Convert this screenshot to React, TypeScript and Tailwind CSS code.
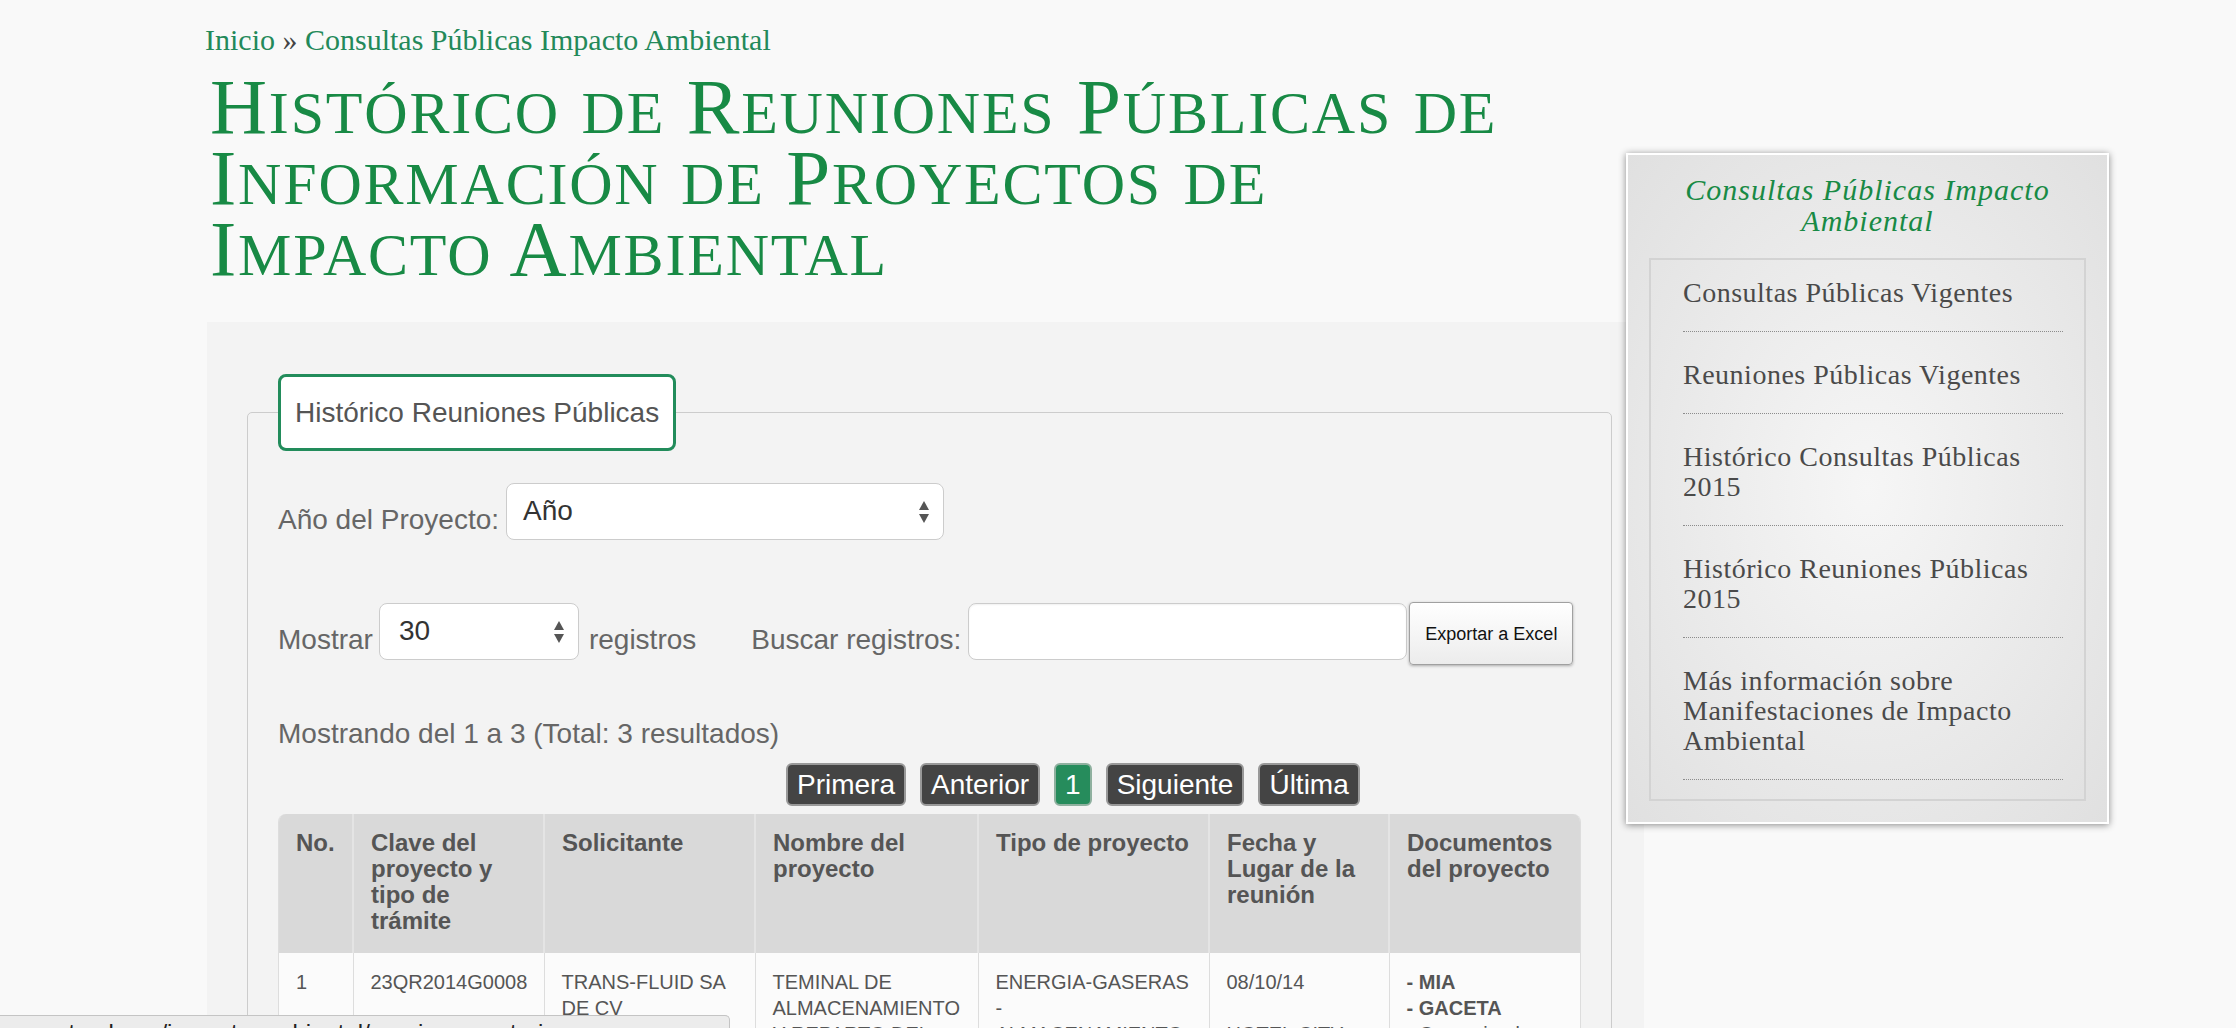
import { Fragment } from 'react'

const sans = "font-['Liberation_Sans',Arial,Helvetica,sans-serif]"
const serif = "font-['Liberation_Serif','Times_New_Roman',serif]"

const sideLinks = [
  'Consultas Públicas Vigentes',
  'Reuniones Públicas Vigentes',
  'Histórico Consultas Públicas 2015',
  'Histórico Reuniones Públicas 2015',
  'Más información sobre Manifestaciones de Impacto Ambiental',
]

const headers = [
  'No.',
  'Clave del proyecto y tipo de trámite',
  'Solicitante',
  'Nombre del proyecto',
  'Tipo de proyecto',
  'Fecha y Lugar de la reunión',
  'Documentos del proyecto',
]

// small caps done by hand: capital letters big, the rest as smaller capitals
function Caps({ line }: { line: string }) {
  return (
    <>
      {line.split(' ').map((word, i) => {
        const big = word[0] === word[0].toUpperCase()
        return (
          <Fragment key={i}>
            {i > 0 && ' '}
            {big && <span>{word[0]}</span>}
            <span className="text-[60px] uppercase leading-[50px]">{big ? word.slice(1) : word}</span>
          </Fragment>
        )
      })}
    </>
  )
}

function SelectArrows() {
  return (
    <svg width="12" height="26" viewBox="0 0 12 26" className="fill-[#555]">
      <path d="M6 2 L11 11 H1 Z" />
      <path d="M1 15 H11 L6 24 Z" />
    </svg>
  )
}

function PageButton({ label, active }: { label: string; active?: boolean }) {
  return (
    <span
      className={
        active
          ? 'flex h-[43px] items-center rounded-[6px] border-2 border-[#8fb09f] bg-[#268c5c] px-[9px] text-[28px] text-white'
          : 'flex h-[43px] items-center rounded-[6px] border-2 border-[#999] bg-[#444] px-[9px] text-[28px] text-white'
      }
    >
      {label}
    </span>
  )
}

export default function App() {
  return (
    <div className={`relative flex h-[1028px] overflow-hidden bg-[#f9f9f9] ${sans}`}>
      {/* Main column */}
      <div className="ml-[205px] flex w-[1439px] shrink-0 flex-col">
        <div className={`pt-[23px] text-[30px] leading-[34px] text-[#23895a] ${serif}`}>
          Inicio <span className="text-[#444]">»</span> Consultas Públicas Impacto Ambiental
        </div>

        <h1 className={`mt-[14px] ml-[5px] text-[79px] leading-[71px] tracking-[1.8px] text-[#188a45] ${serif}`}>
          <Caps line="Histórico de Reuniones Públicas de" />
          <br />
          <Caps line="Información de Proyectos de" />
          <br />
          <Caps line="Impacto Ambiental" />
        </h1>

        <div className="mt-[38px] ml-[2px] flex-1 bg-[#f3f3f3] pt-[52px] pr-[33px] pl-[40px]">
          <fieldset className="rounded-[5px] border border-[#cccccc] px-[30px] pb-[40px]">
            <legend className="rounded-[8px] border-[3px] border-[#228c5b] bg-white px-[14px] py-[19px] text-[28px] leading-[33px] text-[#555]">
              Histórico Reuniones Públicas
            </legend>

            <div className="mt-[32px] flex items-start text-[28px] leading-[32px] text-[#666]">
              <span className="mt-[21px] mr-[7px]">Año del Proyecto:</span>
              <div className="flex h-[57px] w-[438px] items-center justify-between rounded-[8px] border border-[#cccccc] bg-white pr-[13px] pl-[16px] text-[#333]">
                <span className="-mt-[1px]">Año</span>
                <SelectArrows />
              </div>
            </div>

            <div className="mt-[62px] flex items-start text-[28px] leading-[32px] text-[#666]">
              <span className="mt-[22px] mr-[6px]">Mostrar</span>
              <div className="mt-[1px] flex h-[57px] w-[200px] items-center justify-between rounded-[8px] border border-[#cccccc] bg-white pr-[13px] pl-[19px] text-[#333]">
                <span className="-mt-[2px]">30</span>
                <SelectArrows />
              </div>
              <span className="mt-[22px] ml-[10px]">registros</span>
              <span className="mt-[22px] mr-[7px] ml-[55px]">Buscar registros:</span>
              <div className="mt-[1px] h-[57px] w-[439px] rounded-[8px] border border-[#cccccc] bg-white shadow-[inset_0_1px_2px_rgba(0,0,0,0.06)]" />
              <button className="ml-[2px] h-[63px] w-[164px] rounded-[4px] border border-[#a0a0a0] bg-[linear-gradient(#ffffff,#ececec)] text-[18px] text-[#111] shadow-[0_1px_3px_rgba(0,0,0,0.3)]">
                Exportar a Excel
              </button>
            </div>

            <p className="mt-[53px] text-[28px] leading-[32px] text-[#666]">Mostrando del 1 a 3 (Total: 3 resultados)</p>

            <div className="mt-[13px] ml-[508px] flex gap-[14px]">
              <PageButton label="Primera" />
              <PageButton label="Anterior" />
              <PageButton label="1" active />
              <PageButton label="Siguiente" />
              <PageButton label="Última" />
            </div>

            <div className="mt-[8px] overflow-hidden rounded-t-[8px] border-r border-l border-[#dddddd]">
              <table className="w-full table-fixed border-collapse text-left">
                <colgroup>
                  <col className="w-[74px]" />
                  <col className="w-[191px]" />
                  <col className="w-[211px]" />
                  <col className="w-[223px]" />
                  <col className="w-[231px]" />
                  <col className="w-[180px]" />
                  <col className="w-[191px]" />
                </colgroup>
                <thead>
                  <tr className="bg-[#d9d9d9]">
                    {headers.map((h, i) => (
                      <th
                        key={h}
                        className={
                          i === 0
                            ? 'h-[139px] px-[17px] pt-[16px] align-top text-[24px] leading-[26px] font-bold text-[#555]'
                            : 'h-[139px] border-l-2 border-[#e4e4e4] px-[17px] pt-[16px] align-top text-[24px] leading-[26px] font-bold text-[#555]'
                        }
                      >
                        {h}
                      </th>
                    ))}
                  </tr>
                </thead>
                <tbody className="bg-[#fbfbfb] text-[20px] leading-[26px] text-[#555]">
                  <tr>
                    <td className="px-[17px] pt-[16px] pb-[16px] align-top">1</td>
                    <td className="border-l border-[#dddddd] px-[17px] pt-[16px] align-top">23QR2014G0008</td>
                    <td className="border-l border-[#dddddd] px-[17px] pt-[16px] align-top">TRANS-FLUID SA DE CV</td>
                    <td className="border-l border-[#dddddd] px-[17px] pt-[16px] align-top">TEMINAL DE ALMACENAMIENTO Y REPARTO DEL</td>
                    <td className="border-l border-[#dddddd] px-[17px] pt-[16px] align-top">
                      ENERGIA-GASERAS
                      <br />-<br />
                      ALMACENAMIENTO
                    </td>
                    <td className="border-l border-[#dddddd] px-[17px] pt-[16px] align-top">
                      08/10/14
                      <br />
                      <br />
                      HOTEL CITY
                    </td>
                    <td className="border-l border-[#dddddd] px-[17px] pt-[16px] align-top">
                      <b>- MIA</b>
                      <br />
                      <b>- GACETA</b>
                      <br />- Comunicado
                    </td>
                  </tr>
                </tbody>
              </table>
            </div>
          </fieldset>
        </div>
      </div>

      {/* Sidebar */}
      <aside className="relative z-10 mt-[153px] -ml-[18px] w-[483px] self-start border-2 border-white bg-[radial-gradient(ellipse_at_center,#f6f6f6_0%,#e0e0e0_100%)] px-[21px] pt-[19px] pb-[21px] shadow-[0_1px_7px_rgba(0,0,0,0.45)]">
        <h2 className={`text-center text-[30px] leading-[31px] tracking-[1px] text-[#188a45] italic ${serif}`}>
          Consultas Públicas Impacto Ambiental
        </h2>
        <ul className={`mt-[22px] border-2 border-[#d3d3d3] pt-[1px] pr-[21px] pb-[19px] pl-[32px] text-[28px] leading-[30px] tracking-[0.5px] text-[#4a4a4a] ${serif}`}>
          {sideLinks.map((l, i) => (
            <li
              key={l}
              className={
                i === 0
                  ? 'border-b border-dotted border-[#8c8c8c] pt-[17px] pb-[23px]'
                  : 'border-b border-dotted border-[#8c8c8c] pt-[28px] pb-[23px]'
              }
            >
              {l}
            </li>
          ))}
        </ul>
      </aside>

      {/* browser link preview at the bottom */}
      <div className="absolute bottom-0 left-0 h-[13px] w-[730px] overflow-hidden rounded-tr-[5px] border-t border-r border-[#c4c4c4] bg-[#ececec]">
        <div className="-ml-[25px] pt-[4px] text-[24px] leading-[26px] whitespace-nowrap text-[#222]">
          semarnat.gob.mx/impacto-ambiental/reuniones-anteriores
        </div>
      </div>
    </div>
  )
}
